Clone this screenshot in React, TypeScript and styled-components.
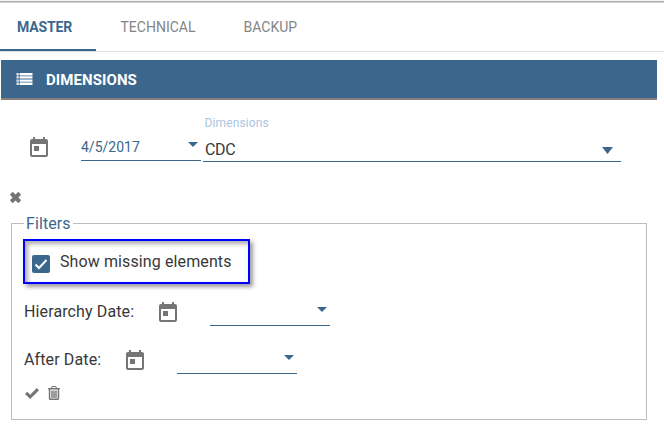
import React from "react";
import styled, { createGlobalStyle } from "styled-components";

const blue = "#3c678c";
const grey = "#757575";

const GlobalStyle = createGlobalStyle`
  *, *::before, *::after { box-sizing: border-box; }
  body {
    margin: 0;
    background: #fff;
    color: #383838;
    font-family: Roboto, "Liberation Sans", sans-serif;
    overflow: hidden;
  }
`;

const Page = styled.main`
  display: flex;
  flex-direction: column;
  width: 664px;
  height: 441px;
  overflow: hidden;
`;

const TopEdge = styled.div`
  flex: none;
  height: 3px;
  background: linear-gradient(#f2f2f2 1px, #b2b2b2 1px, #b2b2b2 2px, #cecece 2px);
`;

const TabBar = styled.nav`
  display: flex;
  flex: none;
  height: 49px;
  border-bottom: 1px solid #e0e0e0;
`;

const Tab = styled.button<{ $active?: boolean; $width: number }>`
  flex: none;
  width: ${(p) => p.$width}px;
  padding: 2px 0 0 ${(p) => (p.$active ? 17 : 24.5)}px;
  border: 0;
  border-bottom: 2px solid ${(p) => (p.$active ? blue : "transparent")};
  background: none;
  color: ${(p) => (p.$active ? blue : "#858585")};
  font: ${(p) => (p.$active ? 700 : 400)} 14px/44px Roboto, sans-serif;
  letter-spacing: ${(p) => (p.$active ? "-0.15px" : "0")};
  text-align: left;
  white-space: nowrap;
`;

const Banner = styled.header`
  display: flex;
  flex: none;
  align-items: center;
  gap: 13px;
  width: 656px;
  height: 40px;
  margin: 8px 0 0 1px;
  padding-left: 15px;
  border-bottom: 2px solid #8a7f7d;
  background: ${blue};
  color: #fff;
  svg { display: block; }
`;

const BannerTitle = styled.h1`
  margin: 0;
  padding-top: 2px;
  font-size: 15px;
  line-height: 36px;
  font-weight: 700;
  letter-spacing: 0.08px;
`;

const Selection = styled.section`
  display: flex;
  flex: none;
  height: 62px;
  padding-left: 27px;
`;

const Icon = styled.svg`
  display: block;
  flex: none;
  fill: ${grey};
`;

const CalendarSlot = styled.div<{ $top: number; $gap: number }>`
  flex: none;
  padding-top: ${(p) => p.$top}px;
  margin-right: ${(p) => p.$gap}px;
`;

const DateField = styled.div<{ $top: number }>`
  display: flex;
  flex: none;
  justify-content: space-between;
  width: 120px;
  height: 27px;
  margin-top: ${(p) => p.$top}px;
  padding-right: 3px;
  border-bottom: 1px solid ${blue};
  color: ${blue};
  font-size: 14px;
  line-height: 27px;
  svg { margin-top: 8px; fill: ${blue}; }
`;

const SelectField = styled.div`
  display: flex;
  flex-direction: column;
  width: 418px;
  height: 47px;
  margin: 15px 0 0 2px;
  border-bottom: 1px solid ${blue};
`;

const SelectLabel = styled.label`
  padding-left: 1.5px;
  color: #abc5de;
  font-size: 12px;
  line-height: 16px;
  letter-spacing: 0.12px;
`;

const SelectValue = styled.div`
  display: flex;
  justify-content: space-between;
  padding: 0 8px 0 2px;
  font-size: 16px;
  line-height: 37px;
  letter-spacing: -0.3px;
  svg { margin-top: 16px; fill: ${blue}; }
`;

const CloseButton = styled.button`
  flex: none;
  width: 11px;
  height: 11px;
  margin: 30px 0 0 10px;
  padding: 0;
  border: 0;
  background: none;
`;

const Filters = styled.fieldset`
  flex: none;
  width: 636px;
  height: 206px;
  min-width: 0;
  margin: 11px 0 0 11px;
  padding: 0 0 0 12px;
  border: 1px solid #bdbdbd;
`;

const Legend = styled.legend`
  height: 19px;
  padding: 0 2px;
  color: ${blue};
  font-size: 16px;
  line-height: 20px;
  letter-spacing: 0.1px;
`;

const Highlight = styled.label`
  display: flex;
  width: 227px;
  height: 45px;
  margin: 6px 0 0 -1px;
  padding: 14px 0 0 7px;
  border: 2px solid #0000ff;
  box-shadow: 3px 3px 4px rgba(0, 0, 0, 0.38), inset 3px 3px 4px rgba(0, 0, 0, 0.32);
`;

const Checkbox = styled.span`
  display: block;
  flex: none;
  width: 18px;
  height: 18px;
  margin-right: 10px;
  border-radius: 2px;
  background: ${blue};
  svg { display: block; fill: none; stroke: #fff; stroke-width: 2; }
`;

const CheckText = styled.span`
  margin-top: -3px;
  font-size: 16px;
  line-height: 20px;
  letter-spacing: 0.11px;
`;

const FilterRow = styled.div<{ $top: number }>`
  display: flex;
  height: 25px;
  margin-top: ${(p) => p.$top}px;
`;

const FilterLabel = styled.span<{ $width: number }>`
  flex: none;
  width: ${(p) => p.$width}px;
  font-size: 16px;
  line-height: 21px;
  letter-spacing: 0.12px;
`;

const Actions = styled.div`
  display: flex;
  align-items: center;
  gap: 9px;
  height: 14px;
  margin-top: 12px;
  padding-left: 1px;
`;

const CalendarIcon = () => (
  <Icon width="24" height="24" viewBox="0 0 24 24">
    <path d="M19 3h-1V1h-2v2H8V1H6v2H5c-1.11 0-1.99.9-1.99 2L3 19c0 1.1.89 2 2 2h14c1.1 0 2-.9 2-2V5c0-1.1-.9-2-2-2zm0 16H5V8h14v11zM7 10h5v5H7z" />
  </Icon>
);

const Caret = ({ width = 10, height = 5 }: { width?: number; height?: number }) => (
  <Icon width={width} height={height} viewBox="0 0 10 5" preserveAspectRatio="none">
    <path d="M0 0h10L5 5z" />
  </Icon>
);

const DatePicker = ({ value, top }: { value?: string; top: number }) => (
  <DateField $top={top}>
    <span>{value}</span>
    <Caret />
  </DateField>
);

export default function App() {
  return (
    <>
      <GlobalStyle />
      <Page>
        <TopEdge />
        <TabBar>
          <Tab $active $width={96}>MASTER</Tab>
          <Tab $width={123}>TECHNICAL</Tab>
          <Tab $width={103}>BACKUP</Tab>
        </TabBar>
        <Banner>
          <svg width="17" height="12" viewBox="0 0 17 12" fill="#fff">
            <path fillOpacity="0.85" d="M.5 0h2.3v2.4H.5zM.5 3.2h2.3v2.4H.5zM.5 6.4h2.3v2.4H.5zM.5 9.6h2.3V12H.5z" />
            <path d="M3.6 0h12.9v2.4H3.6zM3.6 3.2h12.9v2.4H3.6zM3.6 6.4h12.9v2.4H3.6zM3.6 9.6h12.9V12H3.6z" />
          </svg>
          <BannerTitle>DIMENSIONS</BannerTitle>
        </Banner>
        <Selection>
          <CalendarSlot $top={36} $gap={30}><CalendarIcon /></CalendarSlot>
          <DatePicker value="4/5/2017" top={34} />
          <SelectField>
            <SelectLabel>Dimensions</SelectLabel>
            <SelectValue>
              <span>CDC</span>
              <Caret width={11} height={7} />
            </SelectValue>
          </SelectField>
        </Selection>
        <CloseButton aria-label="Close">
          <Icon width="11" height="11" viewBox="0 0 11 11">
            <path d="M2.2.3q.5-.5 1 0l2.3 2.3L7.8.3q.5-.5 1 0l1.9 1.9q.5.5 0 1L8.4 5.5l2.3 2.3q.5.5 0 1l-1.9 1.9q-.5.5-1 0L5.5 8.4l-2.3 2.3q-.5.5-1 0L.3 8.8q-.5-.5 0-1l2.3-2.3L.3 3.2q-.5-.5 0-1z" />
          </Icon>
        </CloseButton>
        <Filters>
          <Legend>Filters</Legend>
          <Highlight>
            <Checkbox>
              <svg width="18" height="18" viewBox="0 0 18 18">
                <path d="m3.5 9.5 3.5 3.5 7.5-8" />
              </svg>
            </Checkbox>
            <CheckText>Show missing elements</CheckText>
          </Highlight>
          <FilterRow $top={17}>
            <FilterLabel $width={132}>Hierarchy Date:</FilterLabel>
            <CalendarSlot $top={0} $gap={30}><CalendarIcon /></CalendarSlot>
            <DatePicker top={-2} />
          </FilterRow>
          <FilterRow $top={23}>
            <FilterLabel $width={99}>After Date:</FilterLabel>
            <CalendarSlot $top={0} $gap={30}><CalendarIcon /></CalendarSlot>
            <DatePicker top={-2} />
          </FilterRow>
          <Actions>
            <Icon width="14" height="11" viewBox="0 0 14 11">
              <path d="M0 5.9 2.2 3.7l3 3L11.8 0 14 2.2 5.2 11z" />
            </Icon>
            <Icon width="12" height="14" viewBox="0 0 12 14">
              <path
                fillRule="evenodd"
                d="M3 2 3.8.5Q4 0 4.6 0h2.8q.6 0 .8.5L9 2h3v1.3h-.8v9.2q0 1.5-1.4 1.5H2.2Q.8 14 .8 12.5V3.3H0V2zm1.1 0h3.8l-.5-1H4.6zM2.3 3.5V12q0 .6.7.6h6q.7 0 .7-.6V3.5zM3.3 4.5h1.4V12H3.3zm2 0h1.4V12H5.3zm2 0h1.4V12H7.3z"
              />
            </Icon>
          </Actions>
        </Filters>
      </Page>
    </>
  );
}
